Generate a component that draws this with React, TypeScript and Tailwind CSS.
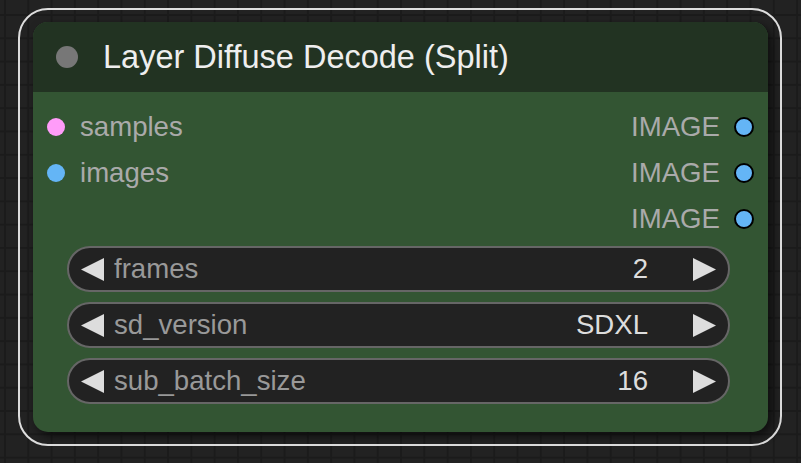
import React from "react";

const font = { fontFamily: '"Liberation Sans", Arial, sans-serif' };

function Slot({ label, color, side }: { label: string; color: string; side: "in" | "out" }) {
  if (side === "in") {
    return (
      <div className="flex h-[46px] items-center">
        <div className="ml-[14px] h-[18px] w-[18px] rounded-full" style={{ background: color }} />
        <span className="ml-[15px] text-[27.6px] leading-none text-[#aaaaaa]">{label}</span>
      </div>
    );
  }
  return (
    <div className="flex h-[46px] items-center justify-end">
      <span className="mr-[14px] text-[27.6px] leading-none text-[#aaaaaa]">{label}</span>
      <div className="mr-[14px] h-[20px] w-[20px] rounded-full border-2 border-black" style={{ background: color }} />
    </div>
  );
}

function Widget({ label, value }: { label: string; value: string }) {
  return (
    <div className="ml-[34px] flex h-[46px] w-[663px] items-center rounded-full border-2 border-[#666666] bg-[#222222]">
      <svg width="23" height="23" viewBox="0 0 23 23" className="ml-[12px]">
        <polygon points="23,0 23,23 0,11.5" fill="#dddddd" />
      </svg>
      <span className="ml-[10px] text-[27.6px] leading-none text-[#999999]">{label}</span>
      <span className="ml-auto text-[27.6px] leading-none text-[#dddddd]">{value}</span>
      <svg width="23" height="23" viewBox="0 0 23 23" className="ml-[45px] mr-[12px]">
        <polygon points="0,0 0,23 23,11.5" fill="#dddddd" />
      </svg>
    </div>
  );
}

export default function App() {
  return (
    <div
      className="h-[463px] w-[801px] overflow-hidden bg-[#222222] pl-[18px] pt-[8px]"
      style={{
        ...font,
        backgroundImage:
          "linear-gradient(to right, #1b1b1b 2px, transparent 2px), linear-gradient(to bottom, #1b1b1b 2px, transparent 2px)",
        backgroundSize: "23.3px 23.3px",
        backgroundPosition: "4px 14px",
      }}
    >
      <div className="h-[438px] w-[764px] rounded-[30px] border-2 border-[#dddddd] pl-[13px] pt-[12px]">
        <div className="flex h-[410px] w-[735px] flex-col overflow-hidden rounded-[15px] bg-[#335533] shadow-[4px_4px_10px_rgba(0,0,0,0.6)]">
          <div className="flex h-[70px] shrink-0 items-center bg-[#223322]">
            <div className="ml-[23px] h-[22px] w-[22px] rounded-full bg-[#777777]" />
            <span className="ml-[25px] text-[32.5px] leading-none text-[#eeeeee]">Layer Diffuse Decode (Split)</span>
          </div>
          <div className="pt-[12px]">
            <div className="flex">
              <div className="flex flex-1 flex-col">
                <Slot label="samples" color="#ff9cf9" side="in" />
                <Slot label="images" color="#64b5f6" side="in" />
              </div>
              <div className="flex flex-1 flex-col">
                <Slot label="IMAGE" color="#64b5f6" side="out" />
                <Slot label="IMAGE" color="#64b5f6" side="out" />
                <Slot label="IMAGE" color="#64b5f6" side="out" />
              </div>
            </div>
            <div className="mt-[4px] flex flex-col gap-[10px]">
              <Widget label="frames" value="2" />
              <Widget label="sd_version" value="SDXL" />
              <Widget label="sub_batch_size" value="16" />
            </div>
          </div>
        </div>
      </div>
    </div>
  );
}
